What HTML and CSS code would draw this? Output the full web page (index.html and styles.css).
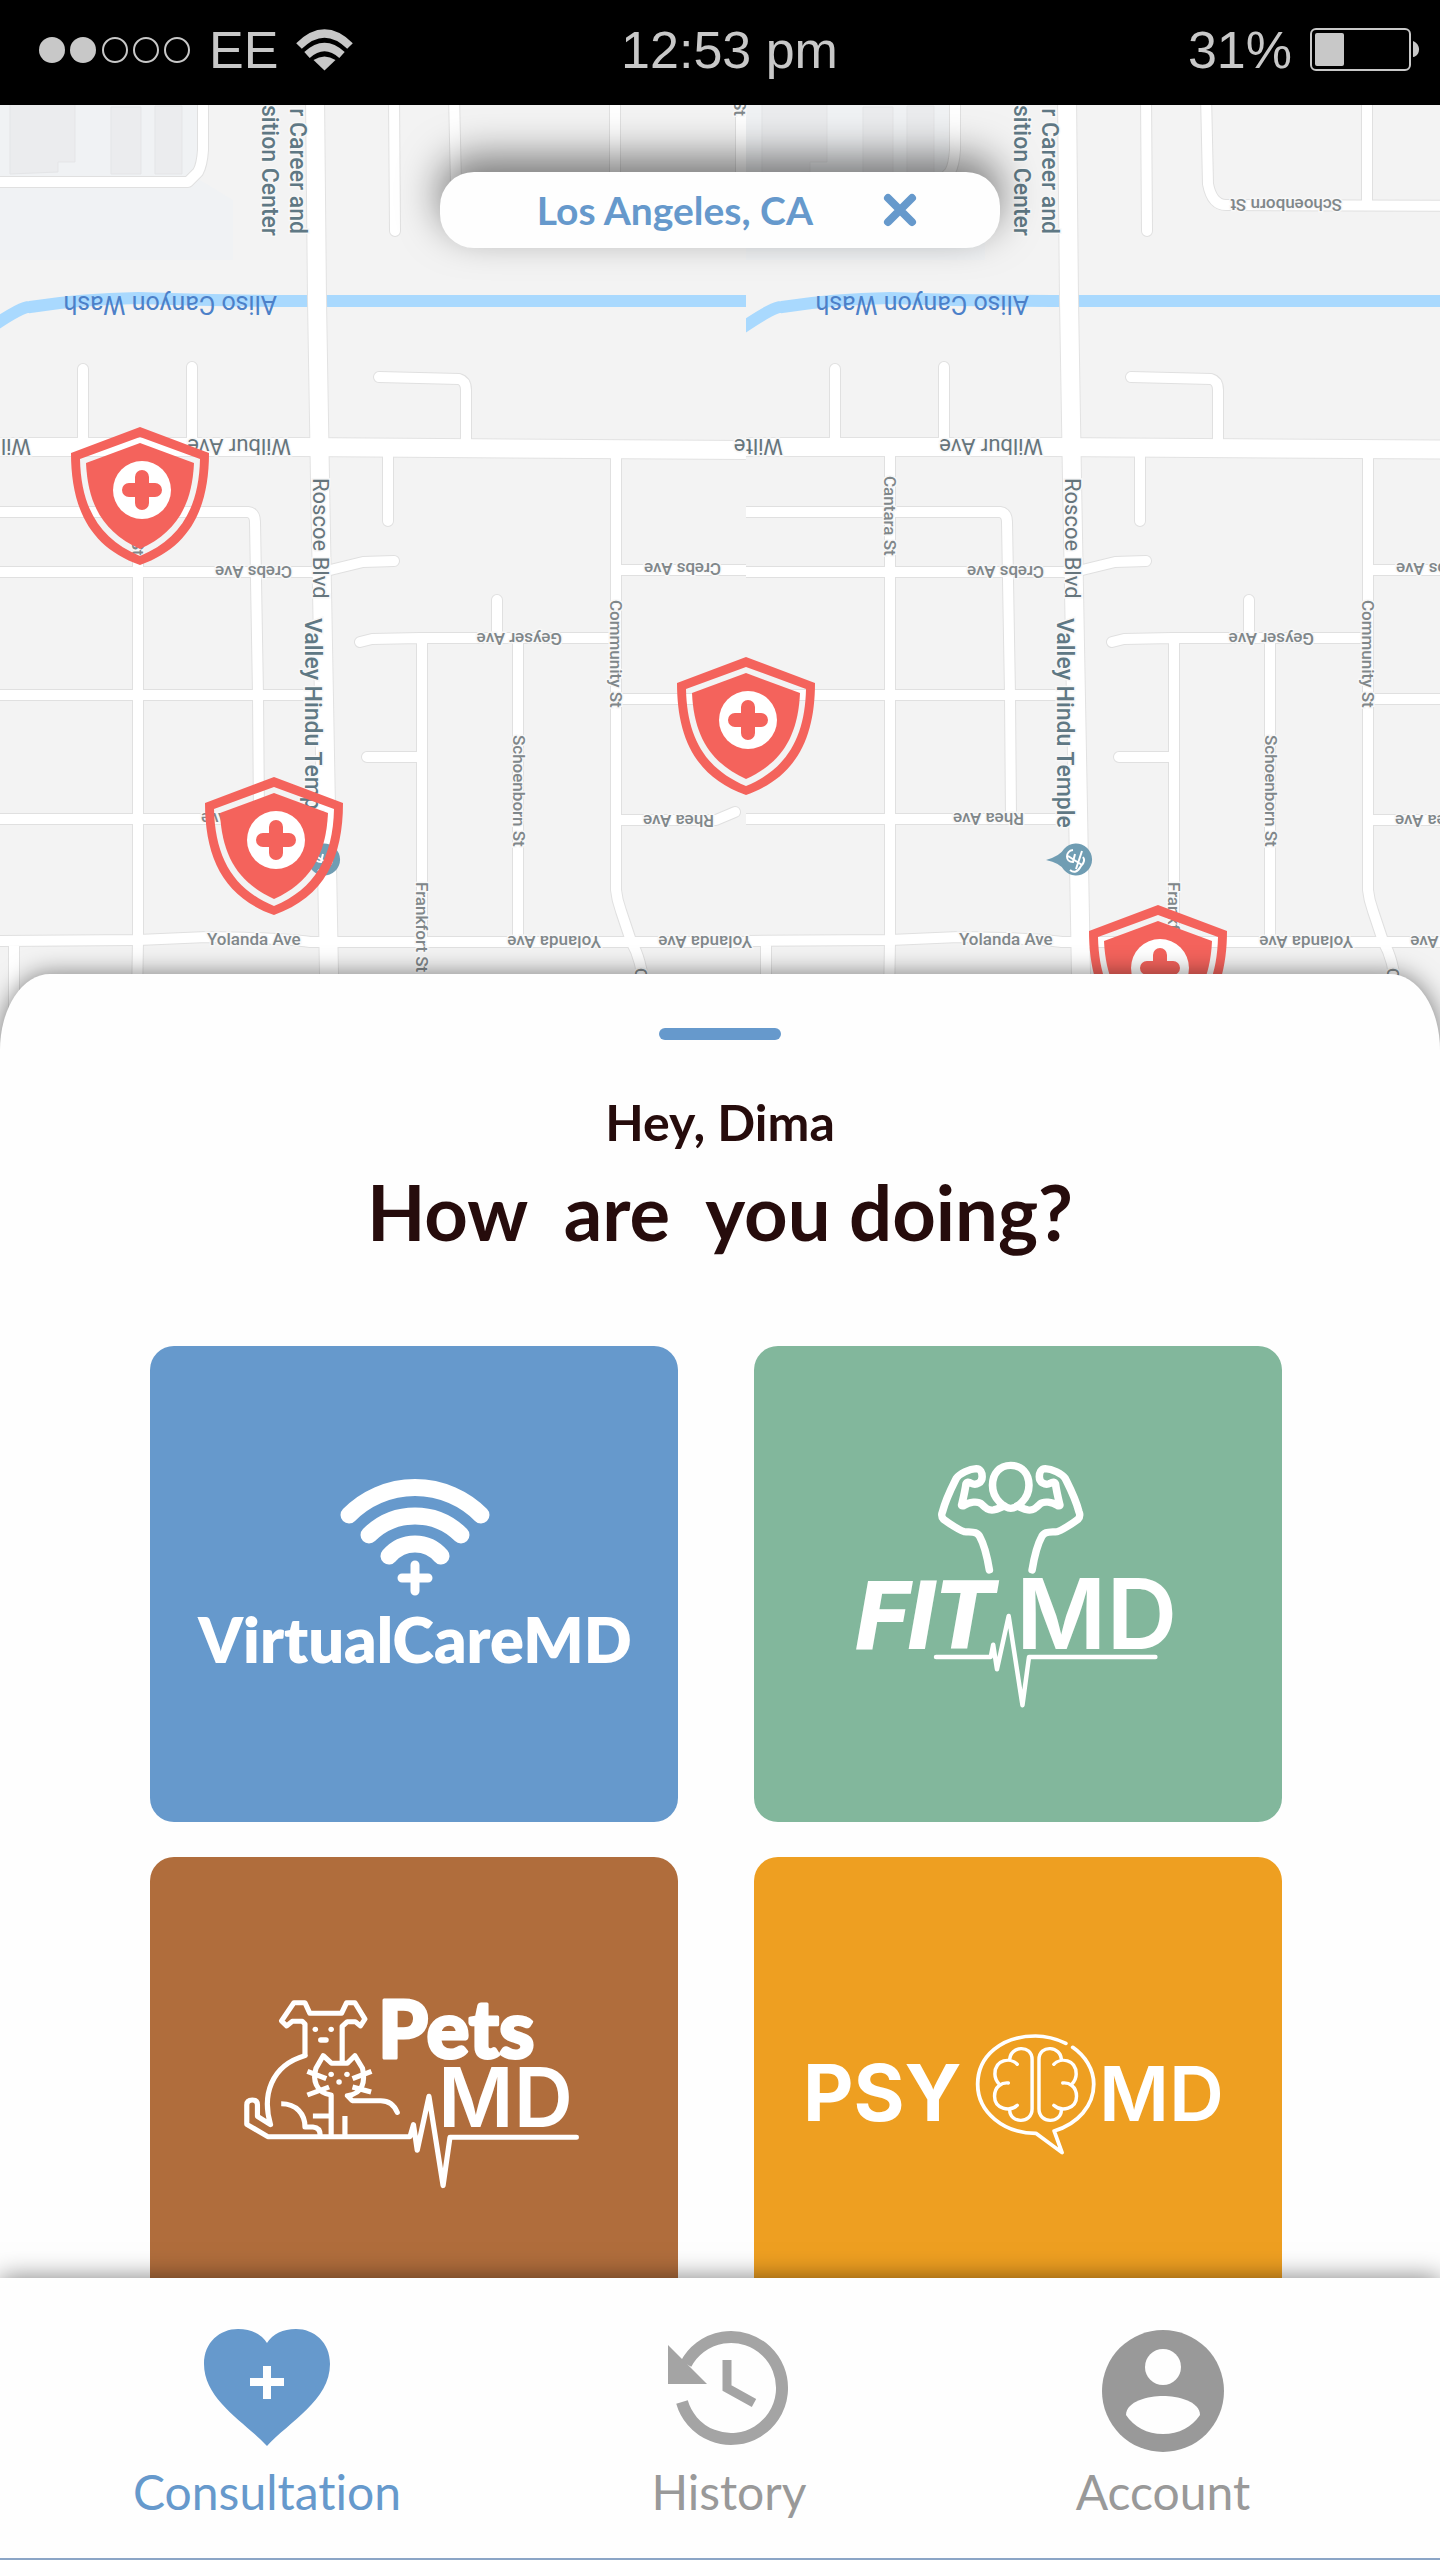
FILE: index.html
```
<!DOCTYPE html>
<html lang="en">
<head>
<meta charset="utf-8">
<meta name="viewport" content="width=device-width, initial-scale=1">
<title>Consultation</title>
<link rel="stylesheet" href="styles.css">
</head>
<body>
<div class="app">
  <header class="status">
    <div class="status-side">
      <svg class="signal" viewBox="0 0 152 26" width="152" height="26" aria-hidden="true">
        <circle cx="13" cy="13" r="13" fill="#c8c8c8"/><circle cx="44" cy="13" r="13" fill="#c8c8c8"/>
        <g fill="none" stroke="#c8c8c8" stroke-width="2"><circle cx="76" cy="13" r="12"/><circle cx="107" cy="13" r="12"/><circle cx="138" cy="13" r="12"/></g>
      </svg>
      <span>EE</span>
      <svg viewBox="0 0 57 42" width="57" height="42" aria-hidden="true" fill="none" stroke="#c8c8c8" stroke-width="8">
        <path d="M3 17 Q28.500 -8 54 17"/><path d="M11 26 Q28.500 10 46 26"/><path d="M28.500 41.500 L17.500 31 Q28.500 24 39.500 31Z" fill="#c8c8c8" stroke="none"/>
      </svg>
    </div>
    <span>12:53 pm</span>
    <div class="status-side status-end">
      <span>31%</span>
      <svg viewBox="0 0 110 44" width="110" height="44" aria-hidden="true">
        <rect x="1" y="1" width="99" height="41" rx="5" fill="none" stroke="#c8c8c8" stroke-width="2"/>
        <rect x="5" y="5" width="29" height="33" rx="2" fill="#c8c8c8"/><path d="M103 13 C111 16 111 27 103 29Z" fill="#c8c8c8"/>
      </svg>
    </div>
  </header>

  <main class="content">
    <section class="map" aria-label="Map">
      <svg class="map-canvas" viewBox="0 105 1440 945" preserveAspectRatio="xMidYMin slice">
        <defs>
          <clipPath id="tile-clip"><rect x="-6" y="105" width="752" height="945"/></clipPath>
          <g id="road-lines" fill="none" stroke-linejoin="round" stroke-linecap="round">
            <path d="M394 95 L395 231 M454 95 L456 184 Q460 205 474 205 L746 206 M615 95 V204 M741 95 V206 M203 95 V150 Q202 165 198 172 L188 182 H-10"/>
            <path d="M83 369 V447 M192 367 V447 M379 377 L459 379 Q466 381 466 390 V448"/>
            <path d="M388 452 V521 M616 452 V890 Q617 900 621 911 L631 941 Q642 960 644 990 L646 1050"/>
            <path d="M-10 512 H248 Q255 513 255 522 L258 695 L259 819 M138 447 V940 L136 1060 M-10 572 H322 L363 562 L394 561 M616 570 H760"/>
            <path d="M-10 695 H325 M616 699 H760 M360 642 L372 639 L420 638 H616 M497 600 V638 M422 638 V945 M518 638 V940 M367 757 H422"/>
            <path d="M-10 819 H325 M616 820 H716 L735 812 M-10 941 L138 940 L207 937 Q280 938 310 942 H760 M14 941 V1060"/>
          </g>
          <g id="main-lines" fill="none"><path d="M-10 447 L300 447 L746 450"/><path d="M315 95 L317 300 L320 480 L329 974 L330 1060" /></g>
          <g id="tile" clip-path="url(#tile-clip)">
            <path d="M-6 105 H200 V180 L233 200 V260 H-6Z" fill="#f0f2f4"/>
            <g fill="#ebecee" stroke="#e4e5e7"><path d="M10 100 H75 V162 H58 V172 L10 174Z"/><path d="M111 107 H141 V174 H111Z"/><path d="M155 106 H182 V174 H155Z"/></g>
            <path d="M-10 328 Q24 305 30 307 Q80 299 138 298 Q220 301 300 301 H750" fill="none" stroke="#a9d9fe" stroke-width="12"/>
            <use href="#road-lines" stroke="#e0e0e0" stroke-width="12"/><use href="#main-lines" stroke="#e2e2e2" stroke-width="20"/>
            <use href="#road-lines" stroke="#fff" stroke-width="10"/><use href="#main-lines" stroke="#fff" stroke-width="18"/>
          </g>
          <g id="shield">
            <path fill="#f4635c" fill-rule="evenodd" d="M69 0 L138 26 C138 80 120 120 69 138 C18 120 0 80 0 26Z M69 10 L9 32 C10 80 28 112 69 129 C110 112 128 80 129 32Z"/>
            <path fill="#f4635c" d="M69 16 L15 36 C17 80 34 106 69 122 C104 106 121 80 123 36Z"/>
            <circle cx="71" cy="63" r="29" fill="#fff"/><path d="M71 50 V76 M58 63 H84" stroke="#f4635c" stroke-width="14" stroke-linecap="round"/>
          </g>
          <g id="temple">
            <path d="M294 860 Q308 856 312 849 A16 16 0 1 1 312 870 Q308 863 294 860Z" fill="#709db3"/>
            <path d="M321 850 C313 851 313 862 321 862 L323 854 M316 856 L330 865 M330 851 L324 869 M318 870 Q324 875 329 866 Q334 861 331 857" fill="none" stroke="#fff" stroke-width="2"/>
          </g>
        </defs>
        <rect y="105" width="1440" height="945" fill="#f3f3f3"/>
        <use href="#tile"/><use href="#tile" x="752"/>
        <use href="#temple"/><use href="#temple" x="752"/>

        <g class="labels">
          <text class="place" text-anchor="end" transform="translate(290 234) rotate(90)">r Career and</text>
          <text class="place" text-anchor="end" transform="translate(262 236) rotate(90)">sition Center</text>
          <text class="water" transform="translate(277 296) rotate(180)">Aliso Canyon Wash</text>
          <text class="avenue" transform="translate(291 439) rotate(180)">Wilbur Ave</text>
          <text class="avenue" transform="translate(31 439) rotate(180)">Wilb</text>
          <text class="avenue" transform="translate(313 478) rotate(90)">Roscoe Blvd</text>
          <text class="place" transform="translate(305 618) rotate(90)">Valley Hindu Temple</text>
          <text transform="translate(132 476) rotate(90)">Cantara St</text>
          <text transform="translate(292 566) rotate(180)">Crebs Ave</text>
          <text transform="translate(721 563) rotate(180)">Crebs Ave</text>
          <text transform="translate(562 633) rotate(180)">Geyser Ave</text>
          <text transform="translate(610 600) rotate(90)">Community St</text>
          <text transform="translate(513 735) rotate(90)">Schoenborn St</text>
          <text transform="translate(416 882) rotate(90)">Frankfort St</text>
          <text transform="translate(272 813) rotate(180)">Rhea Ave</text>
          <text transform="translate(714 815) rotate(180)">Rhea Ave</text>
          <text x="207" y="945">Yolanda Ave</text>
          <text transform="translate(601 936) rotate(180)">Yolanda Ave</text>
          <text transform="translate(752 936) rotate(180)">Yolanda Ave</text>
          <text transform="translate(635 968) rotate(90)">C</text>
          <text text-anchor="end" transform="translate(734 116) rotate(90)">St</text>
        </g>
        <g class="labels">
          <text class="place" text-anchor="end" transform="translate(1042 234) rotate(90)">r Career and</text>
          <text class="place" text-anchor="end" transform="translate(1014 236) rotate(90)">sition Center</text>
          <text transform="translate(1342 199) rotate(180)">Schoenborn St</text>
          <text class="water" transform="translate(1029 296) rotate(180)">Aliso Canyon Wash</text>
          <text class="avenue" transform="translate(1043 439) rotate(180)">Wilbur Ave</text>
          <text class="avenue" transform="translate(783 439) rotate(180)">Wilte</text>
          <text class="avenue" transform="translate(1065 478) rotate(90)">Roscoe Blvd</text>
          <text class="place" transform="translate(1057 618) rotate(90)">Valley Hindu Temple</text>
          <text transform="translate(884 476) rotate(90)">Cantara St</text>
          <text transform="translate(1044 566) rotate(180)">Crebs Ave</text>
          <text transform="translate(1473 563) rotate(180)">Crebs Ave</text>
          <text transform="translate(1314 633) rotate(180)">Geyser Ave</text>
          <text transform="translate(1362 600) rotate(90)">Community St</text>
          <text transform="translate(1265 735) rotate(90)">Schoenborn St</text>
          <text transform="translate(1168 882) rotate(90)">Frankfort St</text>
          <text transform="translate(1024 813) rotate(180)">Rhea Ave</text>
          <text transform="translate(1466 815) rotate(180)">Rhea Ave</text>
          <text x="959" y="945">Yolanda Ave</text>
          <text transform="translate(1353 936) rotate(180)">Yolanda Ave</text>
          <text transform="translate(1504 936) rotate(180)">Yolanda Ave</text>
          <text transform="translate(1387 968) rotate(90)">C</text>
        </g>
        <use href="#shield" x="71" y="427"/><use href="#shield" x="205" y="777"/><use href="#shield" x="677" y="657"/><use href="#shield" x="1089" y="905"/>
      </svg>
      <div class="location">
        <span>Los Angeles, CA</span>
        <button class="clear" type="button" aria-label="Clear location">
          <svg viewBox="0 0 34 34" width="34" height="34"><path d="M5 5 L29 29 M29 5 L5 29" stroke="#6699cc" stroke-width="8" stroke-linecap="round"/></svg>
        </button>
      </div>
    </section>

    <section class="sheet">
      <div class="handle"></div>
      <p class="hello">Hey, Dima</p>
      <h1 class="question">How  are  you doing?</h1>
      <div class="cards">
        <a class="card virtual" href="#virtualcare">
          <svg viewBox="0 0 528 476" fill="none" stroke="#fff" stroke-linecap="round">
            <path d="M199 169 A93 93 0 0 1 331 169 M219 189 A65 65 0 0 1 311 189 M239 210 A34 34 0 0 1 291 210" stroke-width="17"/>
            <path d="M265 219 V245 M252 232 H278" stroke-width="9" />
            <text class="brand" x="265" y="317" text-anchor="middle">VirtualCareMD</text>
          </svg>
        </a>
        <a class="card fit" href="#fit">
          <svg viewBox="0 0 528 476" fill="none" stroke="#fff" stroke-linecap="round" stroke-linejoin="round">
            <g transform="translate(-5 -6) scale(.3444 .3333)">
              <path stroke-width="22" d="M760 505 C745 505 707 480 707 436 C707 400 728 376 760 376 C792 376 813 400 813 436 C813 480 775 505 760 505Z"/>
              <path id="arm" stroke-width="22" d="M698 690 C690 640 678 605 670 590 C662 574 650 577 625 575 C615 573 580 550 565 538 C558 530 558 525 562 515 C572 475 590 440 602 415 C612 400 640 387 660 386 C672 386 677 398 677 410 C677 428 660 438 645 430 Q634 422 630 432 C627 455 622 475 618 492 Q615 500 624 497 C640 485 665 483 675 492 C688 505 695 512 710 510 C722 508 735 500 742 498"/>
              <use href="#arm" transform="translate(1520 0) scale(-1 1)"/>
              <path stroke-width="13" d="M543 951 H702 L709 914 L720 988 L754 828 L794 1096 L813 951 H1180"/>
            </g>
            <text class="fit-word" x="102" y="303">FIT</text>
            <text class="md md-large" x="262" y="303">MD</text>
          </svg>
        </a>
        <a class="card pets" href="#pets">
          <svg viewBox="0 0 528 476" fill="none" stroke="#fff">
            <g transform="translate(0 -8) scale(.3444 .3333)" stroke-width="15" stroke-linejoin="round">
              <path d="M450 620 C350 650 325 740 350 827 L312 802 V768 Q312 753 297 753 Q281 753 281 768 V826 L342 863 H755 L765 827 L776 904 L810 742 L851 1010 L871 865 H1238" stroke-linecap="round"/>
              <path d="M450 622 V525 L442 517 H413 L397 531 L382 516 L418 461 H450 L464 493 H556 L571 461 H595 L624 510 L611 531 L596 518 H573 L558 532 V640"/>
              <path d="M526 858 V738 C480 732 472 690 482 658 L503 620 L527 643 H573 L595 620 L617 658 C625 695 620 734 573 740 L587 755 H670 C695 755 710 770 718 790" stroke-linecap="round"/>
              <path d="M457 667 L512 689 M457 738 L520 714 M643 667 L588 689 M642 729 L588 714"/>
              <path d="M381 764 C425 764 450 795 450 834 H473 Q494 836 494 858 M473 801 H526 M566 801 V863"/>
              <g fill="#fff" stroke="none"><circle cx="480" cy="541" r="8"/><circle cx="526" cy="541" r="8"/><rect x="488" y="565" width="31" height="16" rx="8"/><circle cx="526" cy="676" r="8"/><circle cx="572" cy="676" r="8"/><circle cx="549" cy="699" r="8"/></g>
            </g>
            <text class="pets-word" x="228" y="201">Pets</text>
            <text class="md md-medium" x="288" y="270">MD</text>
          </svg>
        </a>
        <a class="card psy" href="#psy">
          <svg viewBox="0 0 528 476" fill="none" stroke="#fff" stroke-linecap="round" stroke-linejoin="round">
            <g transform="translate(-5 -8) scale(.3444 .3333)" stroke-width="11">
              <path d="M920 583 C890 568 860 561 832 561 C735 561 664 620 664 706 C664 790 740 853 833 853 L909 911 L886 846 C955 825 1001 770 1001 706 C1001 660 975 620 940 595"/>
              <path id="lobe" stroke-width="10" d="M757 634 C757 590 822 585 822 632 V780 C822 825 757 825 757 782 M779 646 C760 625 714 630 714 675 Q714 692 727 706 M753 702 C735 700 713 712 713 742 C713 780 757 790 779 769"/>
              <use href="#lobe" transform="translate(1664 0) scale(-1 1)"/>
            </g>
            <text class="md md-psy" x="49" y="264">PSY</text>
            <text class="md md-small" x="345" y="264">MD</text>
          </svg>
        </a>
      </div>
    </section>
  </main>

  <nav class="tabs">
    <a class="tab active" href="#consultation">
      <svg viewBox="0 0 128 124" width="128" height="124"><path d="M64 118 C42 94 1 72 1 36 C1 14 17 1 35 1 Q55 1 64 15 Q73 1 93 1 C111 1 127 14 127 36 C127 72 86 94 64 118Z" fill="#6699cc"/><path d="M64 38 V71 M47 54 H81" stroke="#fefefe" stroke-width="8"/></svg>
      <span>Consultation</span>
    </a>
    <a class="tab" href="#history">
      <svg viewBox="0 0 122 124" width="122" height="124"><path d="M14 74 A51 51 0 1 0 18 36" fill="none" stroke="#a4a4a4" stroke-width="12"/><path d="M0 17 V56 H39Z" fill="#a4a4a4"/><path d="M59 32 V60 L86 75" fill="none" stroke="#a4a4a4" stroke-width="9"/></svg>
      <span>History</span>
    </a>
    <a class="tab" href="#account">
      <svg viewBox="0 0 122 124" width="122" height="124"><circle cx="61" cy="63" r="61" fill="#999"/><circle cx="61" cy="39" r="18" fill="#fefefe"/><path d="M24 87 C24 73 47 68 61 68 C75 68 98 73 98 87 C90 99 77 106 61 106 C45 106 32 99 24 87Z" fill="#fefefe"/></svg>
      <span>Account</span>
    </a>
  </nav>
</div>
</body>
</html>
```
FILE: styles.css
```
* { box-sizing: border-box; }
body { margin: 0; background: #fefefe; font-family: Lato, "Noto Sans", sans-serif; font-variant-ligatures: none; }
a { text-decoration: none; color: inherit; }
p, h1 { margin: 0; }
svg { display: block; flex: none; }

.app { display: flex; flex-direction: column; height: 100vh; overflow: hidden; }

.status {
  display: grid; grid-template-columns: 1fr auto 1fr; align-items: center; flex: none;
  height: 105px; padding: 0 20px 6px 39px;
  background: #000; color: #c8c8c8;
  font: 400 52px/60px "Liberation Sans", Arial, sans-serif;
}
.status-side { display: flex; align-items: center; gap: 18px; }
.status-end { justify-content: flex-end; }

.content { flex: 1; min-height: 0; overflow: hidden; }
.map { position: relative; height: 945px; }
.map-canvas { width: 100%; height: 100%; }
.labels {
  font: 500 17px Roboto, sans-serif; fill: #80878a;
  stroke: #f8f8f8; stroke-width: 3px; paint-order: stroke;
}
.labels .place { font-size: 23px; fill: #5f7884; }
.labels .avenue { font-size: 22px; font-weight: 400; fill: #66757c; }
.labels .water { font-size: 25px; font-weight: 400; fill: #4c80c8; stroke: none; }

.location {
  position: absolute; top: 67px; left: 0; right: 0; margin: 0 auto;
  display: flex; align-items: center; justify-content: flex-end; gap: 70px;
  width: 560px; height: 76px; padding-right: 83px;
  border-radius: 34px; background: #fefefe; color: #6699cc;
  box-shadow: 0 -16px 40px rgba(0, 0, 0, .5);
  font-size: 39px; font-weight: 700; line-height: 48px;
}
.clear { padding: 0; border: 0; background: none; }

.sheet {
  position: relative; margin-top: -76px; padding-top: 54px;
  border-radius: 50px 50px 0 0 / 76px 76px 0 0;
  background: #fefefe; color: #260c0c; text-align: center;
  box-shadow: 0 0 24px rgba(0, 0, 0, .5);
}
.handle { width: 122px; height: 12px; margin: 0 auto; border-radius: 6px; background: #6699cc; }
.hello { margin-top: 52px; font-size: 50px; font-weight: 700; line-height: 60px; }
.question { margin-top: 12px; font-size: 76px; font-weight: 700; line-height: 96px; white-space: pre; }
.cards { display: grid; grid-template-columns: 1fr 1fr; gap: 35px 76px; padding: 86px 158px 40px 150px; }
.card { display: block; border-radius: 24px; }
.card svg { width: 100%; height: auto; }
.card text { fill: #fff; stroke: none; }
.virtual { background: #6699cc; }
.fit { background: #82b79c; }
.pets { background: #b06d3c; }
.psy { background: #ee9f21; }
.brand { font-size: 63px; font-weight: 800; }
.fit-word { font: italic 900 97px Roboto, sans-serif; }
.md { font-family: Inter, sans-serif; font-weight: 600; }
.md-large { font-size: 98px; }
.md-medium { font-size: 82px; }
.md-small { font-size: 76px; }
.md-psy { font-size: 78px; font-weight: 700; }
.card .pets-word { font-size: 80px; font-weight: 900; stroke: #fff; stroke-width: 3px; stroke-linejoin: round; }

.tabs {
  position: relative; flex: none;
  display: grid; grid-template-columns: 534fr 390fr 478fr;
  height: 282px; padding: 50px 38px 0 0;
  border-bottom: 2px solid #8ba5c6; background: #fefefe;
  box-shadow: 0 0 24px rgba(0, 0, 0, .5);
  color: #999; font-size: 48px; line-height: 60px;
}
.tab { display: flex; flex-direction: column; align-items: center; gap: 10px; }
.active { color: #6699cc; }
```
